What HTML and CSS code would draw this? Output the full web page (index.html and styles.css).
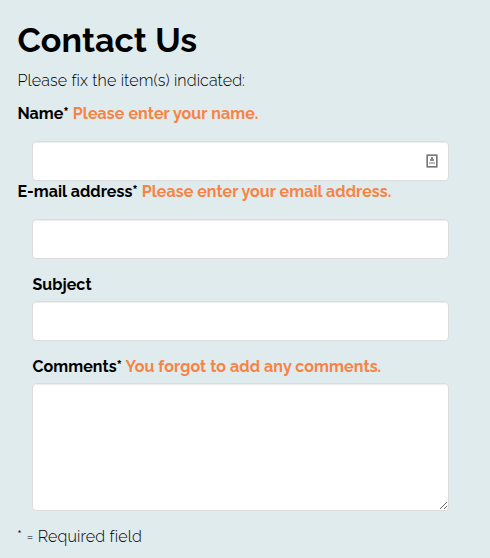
FILE: index.html
```html
<!DOCTYPE html>
<html lang="en">
<head>
<meta charset="utf-8">
<title>Contact Us</title>
<link rel="stylesheet" href="styles.css">
</head>
<body>
<main>
<h1>Contact Us</h1>
<p class="intro">Please fix the item(s) indicated:</p>
<form>
<div class="field name">
<label for="name">Name* <span class="error">Please enter your name.</span></label>
<div class="control"><input id="name" type="text">
<svg class="card" width="12" height="14" viewBox="0 0 12 14" aria-hidden="true"><rect x=".5" y=".5" width="11" height="13" rx=".5" fill="none" stroke="#aaa"/><rect x="1.5" y="1.5" width="9" height="11" fill="#fff" stroke="#777"/><path d="M5 3h2v2H5zM4 5h4v2H4z" fill="#888"/><path d="M3 8h6v2H3z" fill="#bbb"/></svg></div>
</div>
<div class="field email">
<label for="email">E-mail address* <span class="error">Please enter your email address.</span></label>
<div class="control"><input id="email" type="text"></div>
</div>
<div class="field inset subject">
<label for="subject">Subject</label>
<div class="control"><input id="subject" type="text"></div>
</div>
<div class="field inset comments">
<label for="comments">Comments* <span class="error">You forgot to add any comments.</span></label>
<div class="control"><textarea id="comments"></textarea></div>
</div>
</form>
<p class="note">* = Required field</p>
</main>
</body>
</html>
```
FILE: styles.css
```css
* { box-sizing: border-box; }
body { margin: 0; background: #dfebed; color: #000; font: 300 16px/24px Raleway, "Open Sans", sans-serif; }
main { width: 490px; height: 558px; padding: 20px 41px 0 17px; overflow: hidden; }
h1 { margin: 0; padding-left: .5px; height: 40px; font-size: 34px; line-height: 40px; font-weight: 700; letter-spacing: .05px; }
p { margin: 0; white-space: nowrap; }
.intro { margin-top: 9px; height: 24px; padding-left: .4px; letter-spacing: .13px; }
form { margin-top: 9px; }
label { display: block; height: 24px; padding-left: .4px; line-height: 24px; font-weight: 700; white-space: nowrap; letter-spacing: .08px; }
.error { color: #f88344; }
.control { position: relative; margin: 15px 0 0 15px; }
input, textarea { display: block; width: 417px; height: 40px; margin: 0; padding: 8px 12px; border: 1px solid #dcdcdc; border-radius: 4px; background: #fff; box-shadow: inset 0 1px 1px rgba(0, 0, 0, .075); outline: 0; }
textarea { height: 128px; resize: both; }
.card { position: absolute; right: 11px; top: 13px; }
.email label { height: 23px; line-height: 22px; letter-spacing: .05px; }
.inset { padding-left: 15px; margin-top: 14px; }
.inset .control { margin: 4px 0 0; }
.note { margin-top: 14px; letter-spacing: .15px; }
```
